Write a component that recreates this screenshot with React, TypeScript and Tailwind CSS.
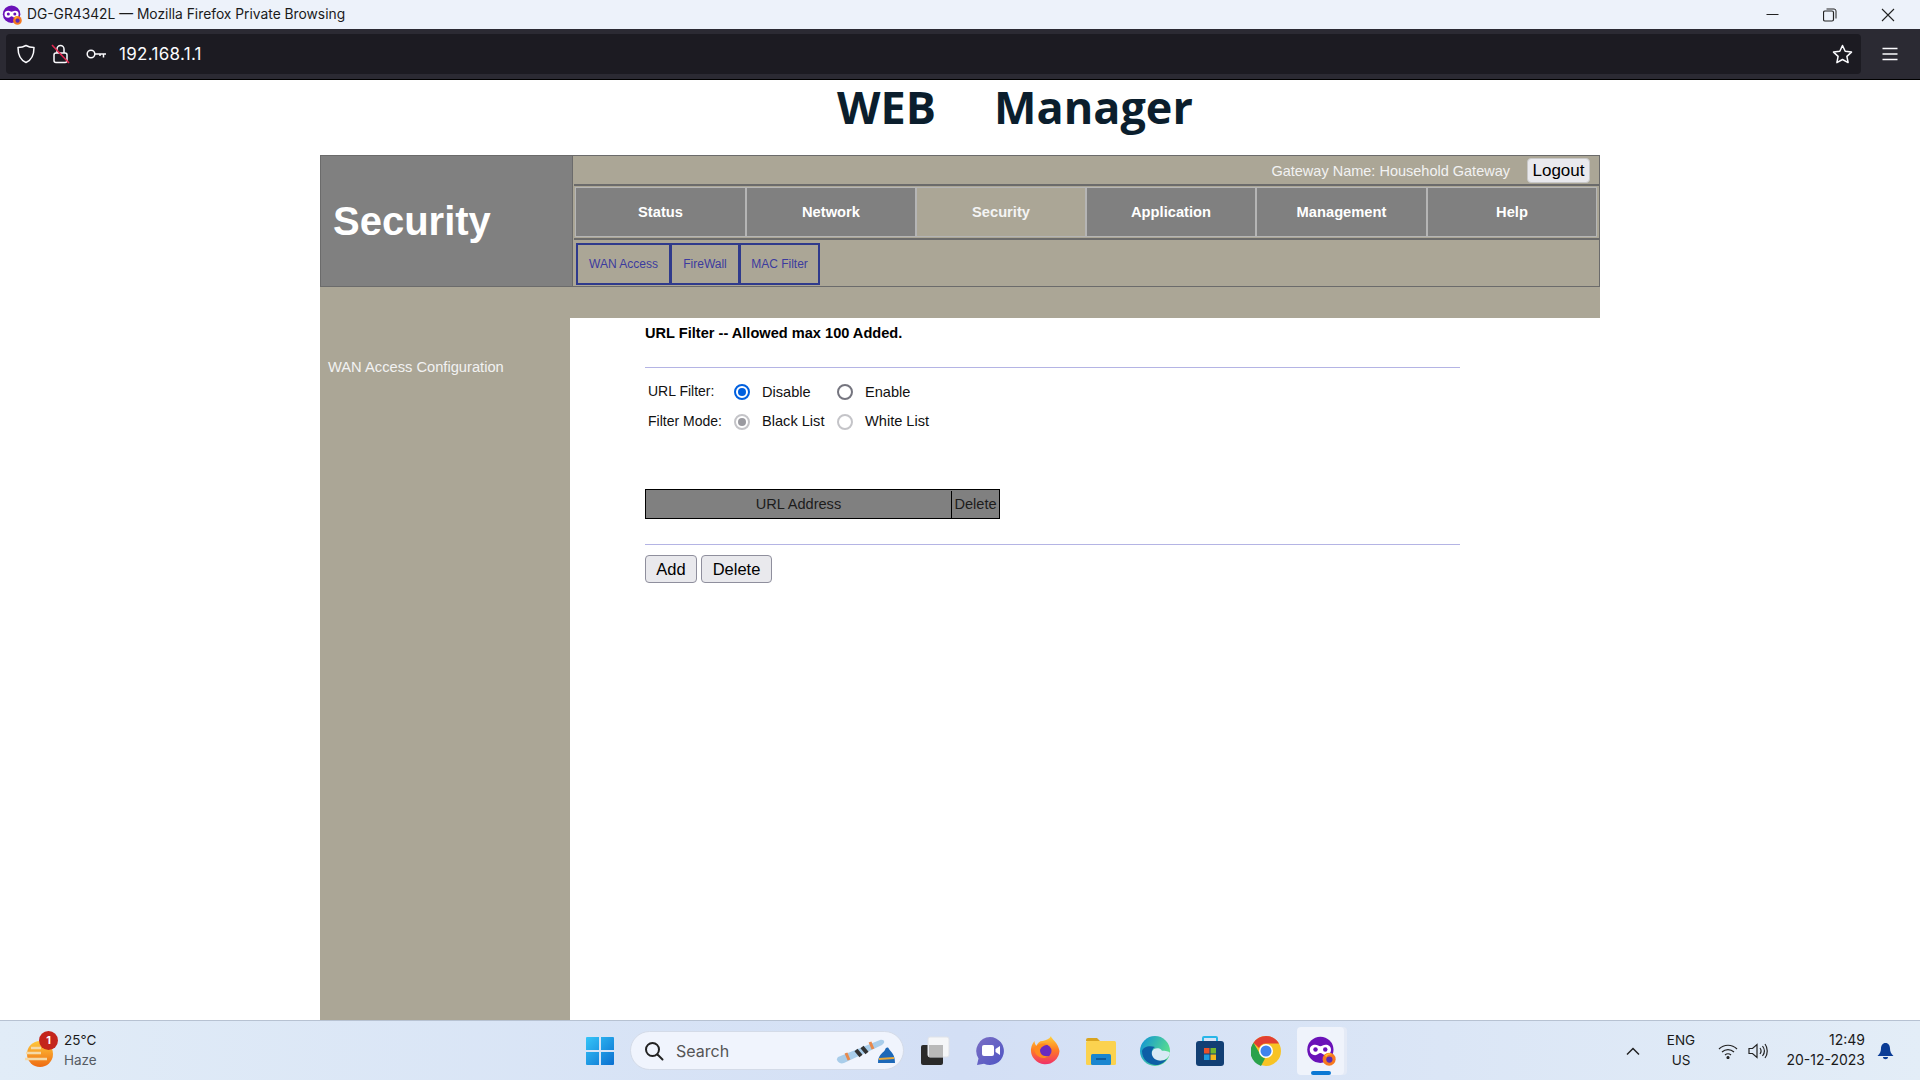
import React from "react";

const tan = "bg-[#aba696]";

function PrivateIcon({ size = 20 }: { size?: number }) {
  return (
    <svg width={size} height={size} viewBox="0 0 24 24" className="shrink-0">
      <circle cx="11.500" cy="11" r="10.500" fill="#6a11b8" />
      <path d="M3 11c0-2.800 2-4 4.300-4 1.900 0 3 1.100 4.200 1.100S13.800 7 15.700 7C18 7 20 8.200 20 11s-2 4.300-4.300 4.300c-2 0-3-1.700-4.200-1.700s-2.200 1.700-4.200 1.700C5 15.300 3 13.800 3 11z" fill="#fff" />
      <circle cx="7.600" cy="10.800" r="1.800" fill="#6a11b8" />
      <circle cx="15.400" cy="10.800" r="1.800" fill="#6a11b8" />
      <circle cx="18.500" cy="18.500" r="5.200" fill="#f6791f" />
      <circle cx="18.700" cy="18.800" r="2.500" fill="#5b2bb3" />
      <path d="M15 16c1-2 4-3 6-1.500-2 0-4 .5-4.500 2z" fill="#ffbd2e" />
    </svg>
  );
}

function TitleBar() {
  return (
    <div className="h-[29px] bg-[#edf2fa] flex items-center shrink-0">
      <div className="w-[27px] pl-[2px] flex"><PrivateIcon /></div>
      <span className="text-[13.800px] text-[#1a1a1a] font-['Inter','Open_Sans',sans-serif] leading-none">DG-GR4342L — Mozilla Firefox Private Browsing</span>
      <div className="flex-1" />
      <div className="flex items-center gap-[44px] pr-[25px]">
        <svg width="13" height="13" viewBox="0 0 13 13"><path d="M0.500 6.500h12" stroke="#222" strokeWidth="1" /></svg>
        <svg width="14" height="14" viewBox="0 0 14 14" fill="none" stroke="#222"><rect x="0.500" y="3" width="10" height="10" rx="1.500" strokeWidth="1.200" /><path d="M3.500 1h7.500a2 2 0 0 1 2 2v7.500" strokeWidth="1" /></svg>
        <svg width="14" height="14" viewBox="0 0 14 14"><path d="M1 1l12 12M13 1L1 13" stroke="#222" strokeWidth="1.100" /></svg>
      </div>
    </div>
  );
}

function Toolbar() {
  return (
    <div className="h-[50px] bg-[#2b2a33] flex items-center pl-[6px] shrink-0 border-b border-b-black box-content">
      <div className="w-[1855px] h-[40px] rounded-[4px] bg-[#1c1b22] flex items-center text-white">
        <svg className="ml-[10px]" width="20" height="20" viewBox="0 0 20 20" fill="none" stroke="#fbfbfe" strokeWidth="1.500"><path d="M10 1.500c2.500 1.500 5 2 8 2 0 6-1 12-8 15-7-3-8-9-8-15 3 0 5.500-.5 8-2z" strokeLinejoin="round" /></svg>
        <svg className="ml-[15px]" width="20" height="22" viewBox="0 0 20 22" fill="none"><rect x="3" y="10" width="13" height="9.500" rx="2" stroke="#fbfbfe" strokeWidth="1.500" /><path d="M6 10V6a3.500 3.500 0 0 1 7 0v4" stroke="#fbfbfe" strokeWidth="1.500" /><path d="M1 2l17 18" stroke="#e22850" strokeWidth="1.600" /></svg>
        <svg className="ml-[15px]" width="21" height="12" viewBox="0 0 21 12" fill="none" stroke="#fbfbfe" strokeWidth="1.500"><circle cx="5" cy="6" r="3.800" /><path d="M9 6h11M17.500 6v3.500M14 6v2" /></svg>
        <span className="ml-[12px] mt-[2px] text-[17px] font-['Inter',sans-serif] text-[#fbfbfe] tracking-[0.3px]">192.168.1.1</span>
        <div className="flex-1" />
        <svg className="mr-[8px]" width="21" height="21" viewBox="0 0 21 21" fill="none" stroke="#fbfbfe" strokeWidth="1.500" strokeLinejoin="round"><path d="M10.500 1.500l2.700 5.800 6.300.8-4.600 4.300 1.200 6.200-5.600-3.100-5.600 3.100 1.200-6.200L1.500 8.100l6.300-.8z" /></svg>
      </div>
      <svg className="ml-[21px]" width="16" height="14" viewBox="0 0 16 14" stroke="#fbfbfe" strokeWidth="1.500"><path d="M0.500 1.500h15M0.500 7h15M0.500 12.500h15" /></svg>
    </div>
  );
}

function NavCell({ label, width, active }: { label: string; width: string; active?: boolean }) {
  return (
    <div className={`${width} h-full flex items-center justify-center border border-[#b5b5b5] text-[14.700px] font-bold ${active ? "bg-[#aba696] text-[#f4f4f4]" : "bg-[#808080] text-white"}`}>
      {label}
    </div>
  );
}

function Header() {
  return (
    <div className="h-[132px] flex border border-[#6b6b6b] bg-[#aba696] box-border">
      <div className="w-[252px] bg-[#808080] border-r border-r-[#6b6b6b] flex items-center pl-[12px] shrink-0">
        <span className="text-[40px] font-bold text-white leading-none pb-[1px]">Security</span>
      </div>
      <div className="flex-1 flex flex-col ml-[1px]">
        <div className="h-[29px] flex items-center justify-end pr-[9px] border-b border-b-[#6b6b6b]">
          <span className="text-[14.500px] text-[#f2f2f2] mr-[17px] mt-[3px]">Gateway Name: Household Gateway</span>
          <button className="w-[63px] h-[25px] mt-[1px] rounded-[4px] bg-[#e9e9ed] border border-[#c8c8c8] text-[17px] text-black leading-none">Logout</button>
        </div>
        <div className="h-[55px] py-[1px] pl-[1px] flex items-stretch border-b-2 border-b-[#6b6b6b] border-t border-t-[#6b6b6b]">
          <NavCell label="Status" width="w-[171px]" />
          <NavCell label="Network" width="w-[170px]" />
          <NavCell label="Security" width="w-[170px]" active />
          <NavCell label="Application" width="w-[170px]" />
          <NavCell label="Management" width="w-[171px]" />
          <NavCell label="Help" width="w-[170px]" />
        </div>
        <div className="flex-1 pl-[2px] pt-[3px] flex items-start">
          {[["WAN Access", "w-[95px]"], ["FireWall", "w-[70px]"], ["MAC Filter", "w-[81px]"]].map(([t, w], i) => (
            <div key={t} className={`${w} h-[42px] flex items-center justify-center border-2 border-[#2f3a8c] text-[12px] text-[#3b3b9e] ${i > 0 ? "-ml-[1px]" : ""}`}>{t}</div>
          ))}
        </div>
      </div>
    </div>
  );
}

function Radio({ checked, disabled }: { checked?: boolean; disabled?: boolean }) {
  const ring = checked && !disabled ? "border-[#0060df]" : disabled ? "border-[#c4c4c8]" : "border-[#75757f]";
  return (
    <span className={`w-[16px] h-[16px] rounded-full border-2 ${ring} bg-white flex items-center justify-center shrink-0`}>
      {checked && <span className={`w-[8px] h-[8px] rounded-full ${disabled ? "bg-[#9a9aa0]" : "bg-[#0060df]"}`} />}
    </span>
  );
}

function FormRow({ label, a, b, disabled, h, textPad }: { label: string; a: string; b: string; disabled?: boolean; h: string; textPad: string }) {
  return (
    <div className={`flex items-center ${h} text-[14.600px] text-[#111]`}>
      <span className="w-[89px] pl-[3px] -mt-[1px] text-[14px]">{label}</span>
      <Radio checked disabled={disabled} />
      <span className={`w-[87px] pl-[12px] whitespace-nowrap ${textPad}`}>{a}</span>
      <Radio disabled={disabled} />
      <span className={`pl-[12px] ${textPad}`}>{b}</span>
    </div>
  );
}

function Content() {
  return (
    <div className="flex-1 pl-[75px] bg-white font-['Liberation_Sans',Arial,sans-serif]">
      <div className="w-[815px]">
        <div className="pt-[5px] h-[44px] text-[14.600px] font-bold text-black border-b border-b-[#b4b4e4] box-content -mb-[1px]">URL Filter -- Allowed max 100 Added.</div>
        <div className="pt-[10px] h-[122px]">
          <FormRow label="URL Filter:" a="Disable" b="Enable" h="h-[30px]" textPad="mt-[2px]" />
          <FormRow label="Filter Mode:" a="Black List" b="White List" disabled h="h-[29px]" textPad="mt-[1px]" />
        </div>
        <div className="flex w-[355px] h-[30px] border border-black bg-[#808080] text-[14.600px] text-[#1c1c1c] pt-[1px]">
          <div className="w-[306px] flex items-center justify-center border-r border-r-black">URL Address</div>
          <div className="flex-1 flex items-center justify-center">Delete</div>
        </div>
        <div className="h-[26px] border-b border-b-[#b4b4e4]" />
        <div className="flex gap-[4px] mt-[10px]">
          <button className="w-[52px] h-[28px] rounded-[4px] bg-[#e9e9ed] border border-[#8f8f9d] text-[16.500px] leading-none text-black">Add</button>
          <button className="w-[71px] h-[28px] rounded-[4px] bg-[#e9e9ed] border border-[#8f8f9d] text-[16.500px] leading-none text-black">Delete</button>
        </div>
      </div>
    </div>
  );
}

function Taskbar() {
  return (
    <div className="h-[60px] shrink-0 border-t border-t-[#b7c2d2] bg-gradient-to-r from-[#e1ecf7] via-[#d3dff5] to-[#e3edf7] flex items-center font-['Inter','Open_Sans',sans-serif] text-[#1a1a1a]">
      <div className="w-[585px] flex items-center pl-[25px] shrink-0">
        <div className="relative w-[37px] h-[40px] flex items-center">
          <svg width="30" height="30" viewBox="0 0 30 30" className="mt-[6px]">
            <defs><linearGradient id="sun" x1="0" y1="0" x2="0" y2="1"><stop offset="0" stopColor="#ffc93c" /><stop offset="1" stopColor="#ee6a12" /></linearGradient></defs>
            <circle cx="15" cy="15" r="13" fill="url(#sun)" />
            <path d="M1 14h15M6 9h10M0 20h22" stroke="#f4d9a8" strokeWidth="2.500" />
          </svg>
          <span className="absolute left-[14px] top-[0px] w-[19px] h-[19px] rounded-full bg-[#c4251c] text-white text-[11px] font-bold flex items-center justify-center">1</span>
        </div>
        <div className="flex flex-col text-[13.500px] leading-[20px] ml-[2px] -mt-[1px]">
          <span>25°C</span>
          <span className="text-[#555b63]">Haze</span>
        </div>
      </div>

      <div className="flex items-center">
        <svg width="30" height="30" viewBox="0 0 30 30">
          <defs><linearGradient id="win" x1="0" y1="0" x2="1" y2="1"><stop offset="0" stopColor="#35c5f8" /><stop offset="1" stopColor="#0a6fd0" /></linearGradient></defs>
          <path d="M1 2a1 1 0 0 1 1-1h12v13H1zM16 1h12a1 1 0 0 1 1 1v12H16zM1 16h13v13H2a1 1 0 0 1-1-1zM16 16h13v12a1 1 0 0 1-1 1H16z" fill="url(#win)" />
        </svg>
        <div className="ml-[15px] w-[274px] h-[39px] rounded-full bg-[#f0f4fd] border border-[#d4dbe8] flex items-center">
          <svg className="ml-[13px]" width="20" height="20" viewBox="0 0 20 20" fill="none" stroke="#222" strokeWidth="2"><circle cx="8.500" cy="8.500" r="6.500" /><path d="M13.500 13.500l5 5" strokeLinecap="round" /></svg>
          <span className="ml-[12px] text-[16px] text-[#555]">Search</span>
          <div className="flex-1" />
          <svg className="mr-[5px]" width="62" height="30" viewBox="0 0 62 30">
            <path d="M2 21L44 4c4-1 6 2 2 5L8 27c-5 2-9-3-6-6z" fill="#a9cdea" />
            <path d="M10 17l3 7M34 6l3 7" stroke="#e8894c" strokeWidth="3" />
            <path d="M20 14l5 6M26 11l5 6" stroke="#333" strokeWidth="4" />
            <path d="M42 27c0-8 4-9 7-13 1-3 3-3 4-1 3 4 6 6 6 14z" fill="#1c68b8" />
            <path d="M43 23l15-1" stroke="#e8a93a" strokeWidth="2" />
          </svg>
        </div>
        <svg className="ml-[16px]" width="30" height="30" viewBox="0 0 30 30">
          <rect x="1" y="9" width="22" height="20" rx="2" fill="#2a2a2a" />
          <rect x="8" y="1" width="21" height="20" rx="2" fill="#f5f6f8" stroke="#dfe2e8" />
          <rect x="9" y="9" width="14" height="12" fill="#b9b9b9" />
        </svg>
        <svg className="ml-[25px]" width="30" height="30" viewBox="0 0 30 30">
          <defs><linearGradient id="teams" x1="0" y1="0" x2="1" y2="1"><stop offset="0" stopColor="#7b6fc4" /><stop offset="1" stopColor="#4f55c4" /></linearGradient></defs>
          <path d="M15 1a14 14 0 1 1-6 26.700L2 29l1.500-6.500A14 14 0 0 1 15 1z" fill="url(#teams)" />
          <rect x="7" y="9" width="12" height="11" rx="2" fill="#fff" />
          <path d="M20.500 13l4.500-3v9l-4.500-3z" fill="#fff" />
        </svg>
        <svg className="ml-[25px]" width="30" height="30" viewBox="0 0 30 30">
          <defs><linearGradient id="ff" x1="0.500" y1="0" x2="0.500" y2="1"><stop offset="0" stopColor="#ffd43a" /><stop offset="0.500" stopColor="#ff7a24" /><stop offset="1" stopColor="#f0306a" /></linearGradient></defs>
          <path d="M21 0c0 3 7 6 8.500 15A14 14 0 1 1 1 13c.5-4 2-6 3.500-8 0 2 1 4 2 5 1-3 3-5 6-5 4-1 7-2 8.500-5z" fill="url(#ff)" />
          <circle cx="15" cy="15" r="6.500" fill="#6a2bc0" />
          <path d="M4 12c3-4 10-6 14-3-4 0-7 2-8 5 0 4 3 7 9 6-6 5-15 0-15-8z" fill="#ff8a1f" />
        </svg>
        <svg className="ml-[25px]" width="31" height="28" viewBox="0 0 31 28">
          <path d="M1 3a2 2 0 0 1 2-2h9l3 3H1z" fill="#d9a420" />
          <rect x="1" y="4" width="30" height="24" rx="1.500" fill="#fbd24f" />
          <rect x="6" y="17" width="20" height="11" rx="1.500" fill="#1a86d0" />
          <path d="M11 22h10" stroke="#0b4e8c" strokeWidth="1.500" />
        </svg>
        <svg className="ml-[24px]" width="30" height="30" viewBox="0 0 30 30">
          <defs><linearGradient id="edge" x1="0" y1="0" x2="1" y2="0.500"><stop offset="0" stopColor="#0c8fd8" /><stop offset="1" stopColor="#5ce08c" /></linearGradient></defs>
          <circle cx="15" cy="15" r="15" fill="url(#edge)" />
          <path d="M30 17c-1 6-9 10-15 7-4-2-5-8-1-11 4-2 9 0 8 4-2 1-5 0-5 0 3-4 13-2 13 0z" fill="#d8eaf5" />
          <path d="M2 15c0 9 8 15 16 14 4-1 7-3 9-6-6 3-13 2-15-4-1-4 1-7 3-8C9 9 3 11 2 15z" fill="#0d5ea6" />
        </svg>
        <svg className="ml-[25px]" width="30" height="31" viewBox="0 0 30 31">
          <path d="M8 6V3a1 1 0 0 1 1-1h12a1 1 0 0 1 1 1v3" fill="none" stroke="#29b6e8" strokeWidth="2" />
          <rect x="1" y="6" width="28" height="25" rx="3" fill="#123f74" />
          <rect x="9" y="13" width="5.500" height="5.500" fill="#e8512a" />
          <rect x="15.500" y="13" width="5.500" height="5.500" fill="#74b72e" />
          <rect x="9" y="19.500" width="5.500" height="5.500" fill="#1c9be0" />
          <rect x="15.500" y="19.500" width="5.500" height="5.500" fill="#f5b71c" />
        </svg>
        <svg className="ml-[26px]" width="30" height="30" viewBox="0 0 30 30">
          <circle cx="15" cy="15" r="15" fill="#f7c325" />
          <path d="M15 0a15 15 0 0 1 13 7.500H15a7.500 7.500 0 0 0-7 4.500L2.500 6.700A15 15 0 0 1 15 0z" fill="#e23f33" />
          <path d="M2.500 6.700L9 18a7.500 7.500 0 0 0 5 4.500L10 30A15 15 0 0 1 2.500 6.700z" fill="#2aa24c" />
          <circle cx="15" cy="15" r="7" fill="#fff" />
          <circle cx="15" cy="15" r="5.500" fill="#3f83ee" />
        </svg>
        <div className="ml-[16px] relative w-[47px] h-[48px] rounded-[4px] bg-[#eff3fb] shadow-[3px_0_0_#e4eaf6] flex flex-col items-center justify-center">
          <PrivateIcon size={30} />
          <span className="absolute bottom-0 w-[20px] h-[4px] rounded-full bg-[#0b78d4]" />
        </div>
      </div>

      <div className="flex-1" />
      <div className="flex items-center pr-[26px]">
        <svg width="16" height="10" viewBox="0 0 16 10" fill="none" stroke="#222" strokeWidth="1.500"><path d="M2 8.500l6-6 6 6" /></svg>
        <div className="ml-[24px] w-[32px] flex flex-col items-center text-[13.500px] leading-[20px] -mt-[1px]"><span>ENG</span><span>US</span></div>
        <svg className="ml-[21px]" width="20" height="16" viewBox="0 0 20 16" fill="none" stroke="#222" strokeWidth="1.200"><path d="M1 6c5-5 13-5 18 0M4 9c3.500-3.200 8.500-3.200 12 0M7 12c1.800-1.500 4.200-1.500 6 0" /><circle cx="10" cy="14.500" r="1" fill="#222" /></svg>
        <svg className="ml-[10px]" width="21" height="18" viewBox="0 0 21 18" fill="none" stroke="#222" strokeWidth="1.200"><path d="M1 6.500h3.500L9 2.500v13l-4.500-4H1zM12 6c1.300 1.800 1.300 4.200 0 6M14.500 4c2.300 3 2.300 7 0 10M17 2c3 4 3 10 0 14" /></svg>
        <div className="ml-[18px] w-[78px] flex flex-col items-end text-[14px] leading-[20px] -mt-[1px]"><span>12:49</span><span className="whitespace-nowrap">20-12-2023</span></div>
        <svg className="ml-[12px]" width="17" height="18" viewBox="0 0 17 18" fill="#0a3c96"><path d="M8.500 1c3 0 4.500 2.500 4.500 5.500 0 3 1 5 3.500 7.500H.500C3 11.500 4 9.500 4 6.500 4 3.500 5.500 1 8.500 1z" /><path d="M6 15h5c0 3-5 3-5 0z" /></svg>
      </div>
    </div>
  );
}

export default function App() {
  return (
    <div className="h-screen w-screen overflow-hidden flex flex-col font-['Liberation_Sans',Arial,sans-serif] bg-white">
      <TitleBar />
      <Toolbar />
      <div className="flex-1 min-h-0 pl-[320px] pr-[320px] flex flex-col">
        <div className="h-[75px] shrink-0 flex items-start justify-center pl-[110px]">
          <h1 className="font-['Open_Sans',sans-serif] font-bold text-[45px] text-[#0b1e2d] leading-[54px] whitespace-nowrap flex gap-[58px]"><span>WEB</span><span>Manager</span></h1>
        </div>
        <Header />
        <div className={`h-[31px] shrink-0 ${tan}`} />
        <div className="flex-1 flex min-h-0">
          <div className={`w-[250px] shrink-0 ${tan} pl-[8px] pt-[38px] text-[14.700px] text-[#f2f2f2]`}>WAN Access Configuration</div>
          <Content />
        </div>
      </div>
      <Taskbar />
    </div>
  );
}
